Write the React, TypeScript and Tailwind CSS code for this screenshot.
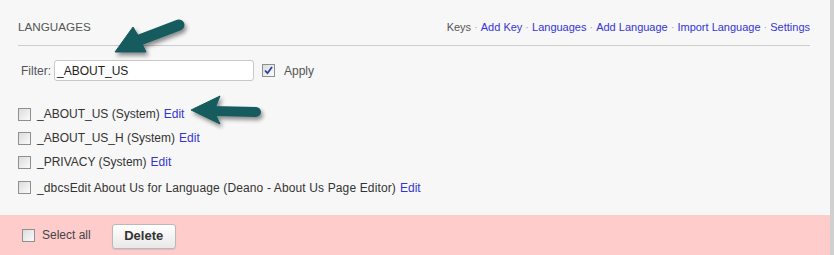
const font = "font-['Liberation_Sans',Arial,sans-serif]";

function Box({ checked = false }: { checked?: boolean }) {
  return (
    <span className="flex h-[13px] w-[13px] shrink-0 items-center justify-center border border-[#8f8f8f] bg-gradient-to-br from-[#dcdcdc] to-[#fbfbfb]">
      {checked && (
        <svg width="9" height="9" viewBox="0 0 9 9">
          <path d="M1 4.5 L3.5 7.2 L8 1" fill="none" stroke="#2a3f9c" strokeWidth="1.8" />
        </svg>
      )}
    </span>
  );
}

const links = ["Add Key", "Languages", "Add Language", "Import Language", "Settings"];

const rows = [
  "_ABOUT_US (System)",
  "_ABOUT_US_H (System)",
  "_PRIVACY (System)",
  "_dbcsEdit About Us for Language (Deano - About Us Page Editor)",
];

function Arrows() {
  return (
    <svg className="pointer-events-none absolute left-0 top-0" width="834" height="255">
      <defs>
        <filter id="sh" x="-30%" y="-30%" width="160%" height="160%">
          <feGaussianBlur in="SourceAlpha" stdDeviation="2" />
          <feOffset dx="2" dy="3" result="b" />
          <feComponentTransfer>
            <feFuncA type="linear" slope="0.45" />
          </feComponentTransfer>
          <feMerge>
            <feMergeNode />
            <feMergeNode in="SourceGraphic" />
          </feMerge>
        </filter>
      </defs>
      <g filter="url(#sh)" fill="#175b5e" stroke="#175b5e" strokeLinejoin="round">
        <line x1="179" y1="25" x2="137" y2="41" strokeWidth="11" strokeLinecap="round" />
        <polygon points="115,52 133,27 139,37 146,52" strokeWidth="1" />
        <line x1="256" y1="112" x2="212" y2="111" strokeWidth="10" strokeLinecap="round" />
        <polygon points="191,110 220,96 214,111 220,124" strokeWidth="1" />
      </g>
    </svg>
  );
}

export default function App() {
  return (
    <div className={`relative flex h-[255px] w-[834px] bg-[#f7f7f7] text-[12px] text-[#333] ${font}`}>
      <div className="flex flex-1 flex-col">
        <div className="ml-[18px] mr-[20px] flex items-center justify-between border-b border-[#cccccc] pb-[10px] pt-[19px] leading-[16px]">
          <span className="text-[11.7px] text-[#555]">LANGUAGES</span>
          <div className="flex items-center text-[11px]">
            <span className="text-[#555]">Keys</span>
            {links.map((l) => (
              <span key={l} className="flex items-center">
                <span className="px-[3px] text-[#aaa]">·</span>
                <span className="text-[#3535d0]">{l}</span>
              </span>
            ))}
          </div>
        </div>

        <div className="mt-[14px] flex items-center pl-[21px]">
          <span className="text-[#555]">Filter:</span>
          <div className="ml-[3px] flex h-[21px] w-[200px] items-center rounded-[3px] border border-[#c8c8c8] bg-white px-[2px] text-[12px] text-[#222]">
            _ABOUT_US
          </div>
          <span className="ml-[8px]">
            <Box checked />
          </span>
          <span className="ml-[9px] text-[#555]">Apply</span>
        </div>

        <div className="mt-[21px] flex flex-col pl-[18px]">
          {rows.map((r, i) => (
            <div key={i} className={`flex items-center ${i === 3 ? "h-[26px] pt-[1px]" : "h-[24px]"}`}>
              <Box />
              <span className={`ml-[6px] ${i === 3 ? "tracking-[0.13px]" : ""}`}>{r}</span>
              <span className="ml-[4px] text-[#3535d0]">Edit</span>
            </div>
          ))}
        </div>

        <div className="mt-auto flex h-[40px] items-center bg-[#ffcccc] pl-[22px]">
          <Box />
          <span className="ml-[7px] text-[#444]">Select all</span>
          <button className="ml-[21px] mt-[2px] h-[25px] w-[64px] rounded-[3px] border border-[#b8b8b8] bg-gradient-to-b from-white to-[#e8e8e8] text-[13px] font-bold text-[#333] shadow-[0_1px_1px_rgba(0,0,0,0.1)]">
            Delete
          </button>
        </div>
      </div>
      <div className="w-[4px] bg-[#d0d0d0]" />
      <Arrows />
    </div>
  );
}
